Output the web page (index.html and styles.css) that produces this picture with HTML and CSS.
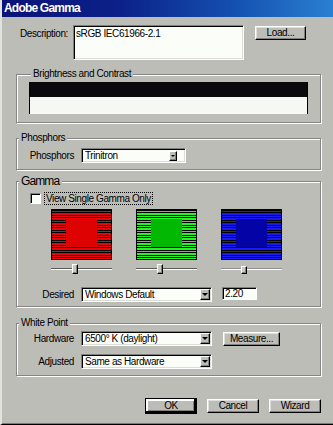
FILE: index.html
```html
<!DOCTYPE html>
<html>
<head>
<meta charset="utf-8">
<title>Adobe Gamma</title>
<link rel="stylesheet" href="styles.css">
</head>
<body>
<div class="window">
  <div class="titlebar">Adobe Gamma</div>
  <div class="main">
    <div class="desc-row">
      <span class="desc-lbl">Description:</span>
      <div class="textarea">sRGB IEC61966-2.1</div>
      <div class="btn load-btn">Load...</div>
    </div>

    <fieldset class="group bc-group">
      <legend>Brightness and Contrast</legend>
      <div class="bc-panel"><div class="bc-black"></div><div class="bc-white"></div></div>
    </fieldset>

    <fieldset class="group ph-group">
      <legend>Phosphors</legend>
      <div class="form-row">
        <span class="lbl">Phosphors</span>
        <div class="select sel-ph"><span class="sel-text">Trinitron</span><span class="drop drop-small"><i class="tri tri-small"></i></span></div>
      </div>
    </fieldset>

    <fieldset class="group gm-group">
      <legend class="legend-big">Gamma</legend>
      <div class="check-row">
        <span class="checkbox"></span>
        <span class="focus-lbl">View Single Gamma Only</span>
      </div>
      <div class="patches">
        <div class="gcol">
          <div class="patch patch-red"><div class="inner inner-red"></div></div>
          <div class="slider"><div class="track"></div><div class="thumb" style="left:21px"></div></div>
        </div>
        <div class="gcol">
          <div class="patch patch-green"><div class="inner inner-green"></div></div>
          <div class="slider"><div class="track"></div><div class="thumb" style="left:21px"></div></div>
        </div>
        <div class="gcol">
          <div class="patch patch-blue"><div class="inner inner-blue"></div></div>
          <div class="slider"><div class="track track-light"></div><div class="thumb thumb-short" style="left:20px"></div></div>
        </div>
      </div>
      <div class="form-row desired-row">
        <span class="lbl">Desired</span>
        <div class="select sel-wide"><span class="sel-text">Windows Default</span><span class="drop"><i class="tri"></i></span></div>
        <div class="field">2.20</div>
      </div>
    </fieldset>

    <fieldset class="group wp-group">
      <legend>White Point</legend>
      <div class="form-row">
        <span class="lbl">Hardware</span>
        <div class="select sel-wide"><span class="sel-text">6500° K (daylight)</span><span class="drop"><i class="tri"></i></span></div>
        <div class="btn measure-btn">Measure...</div>
      </div>
      <div class="form-row adj-row">
        <span class="lbl">Adjusted</span>
        <div class="select sel-wide"><span class="sel-text">Same as Hardware</span><span class="drop"><i class="tri"></i></span></div>
      </div>
    </fieldset>

    <div class="actions">
      <div class="btn default-btn">OK</div>
      <div class="btn act-btn">Cancel</div>
      <div class="btn act-btn">Wizard</div>
    </div>
  </div>
</div>
</body>
</html>
```

FILE: styles.css
```css
* { box-sizing: border-box; }
html, body { margin: 0; padding: 0; }
body {
  width: 333px;
  height: 425px;
  overflow: hidden;
  background: #bdbdb8;
  font-family: "Liberation Sans", Arial, sans-serif;
  font-size: 10px;
  letter-spacing: -0.4px;
  line-height: 13px;
  color: #000;
}
.window {
  width: 333px;
  height: 425px;
  background: #bdbdb8;
  border-left: 2px solid #e2e2de;
  border-bottom: 1px solid #000;
  box-shadow: inset 0 -1px 0 #7a7a7a;
  display: flex;
  flex-direction: column;
}
.titlebar {
  height: 17px;
  background: linear-gradient(to right, #0a1478 0%, #0b2088 35%, #1450b0 70%, #2a80d2 100%);
  color: #fff;
  font-weight: bold;
  font-size: 12px;
  letter-spacing: -0.8px;
  line-height: 17px;
  padding-left: 2px;
}
.main { padding: 0 12px 0 14px; }

/* description */
.desc-row { display: flex; margin-top: 8px; align-items: flex-start; }
.desc-lbl { width: 52px; text-align: right; margin-right: 5px; padding-top: 2px; }
.textarea {
  width: 171px;
  height: 35px;
  background: #fbfdf9;
  border: 1px solid;
  border-color: #808080 #fff #fff #808080;
  box-shadow: inset 1px 1px 0 #000, inset -1px -1px 0 #dcdcd8;
  padding: 1px 2px;
}
.btn {
  background: #bdbdb8;
  border: 1px solid;
  border-color: #fff #000 #000 #fff;
  box-shadow: inset -1px -1px 0 #808080, inset 1px 1px 0 #dedede;
  display: flex;
  align-items: center;
  justify-content: center;
  line-height: 12px;
}
.load-btn { width: 51px; height: 14px; margin-left: 11px; margin-top: 1px; }

/* group boxes */
.group {
  margin: 0;
  padding: 0;
  min-width: 0;
  border: 1px solid #858585;
  box-shadow: 1px 1px 0 #fff, inset 1px 1px 0 #fff;
}
.group legend {
  padding: 0 2px;
  margin-left: 2px;
  line-height: 12px;
  background: #bdbdb8;
}
.group legend.legend-big { font-size: 12px; letter-spacing: -0.9px; line-height: 14px; padding: 0 3px 0 2px; }

.bc-group { margin-top: 8px; padding: 2px 12px 8px; }
.bc-panel { border-left: 1px solid #000; border-right: 1px solid #000; }
.bc-black { height: 15px; background: #0a0a0c; }
.bc-white { height: 17px; background: #f6f8f4; }

.ph-group { margin-top: 9px; padding: 4px 0 6px; }
.gm-group { margin-top: 4px; padding: 4px 0 4px; }
.wp-group { margin-top: 10px; padding: 2px 0 6px; }

.form-row { display: flex; align-items: center; height: 15px; }
.lbl { width: 57px; text-align: right; margin-right: 7px; }
.adj-row { margin-top: 8px; }
.desired-row { margin-top: 12px; }

.select {
  height: 15px;
  background: #fbfdf9;
  border: 1px solid;
  border-color: #808080 #fff #fff #808080;
  box-shadow: inset 1px 1px 0 #000, inset -1px -1px 0 #dcdcd8;
  padding: 1px 1px 1px 2px;
  display: flex;
  align-items: center;
}
.sel-text { flex: 1; line-height: 11px; padding-left: 1px; white-space: nowrap; }
.sel-ph { width: 105px; }
.sel-wide { width: 131px; }
.drop {
  width: 10px;
  height: 11px;
  background: #bdbdb8;
  border: 1px solid;
  border-color: #fff #000 #000 #fff;
  box-shadow: inset -1px -1px 0 #808080;
  display: flex;
  align-items: center;
  justify-content: center;
}
.drop-small { width: 8px; height: 10px; margin-right: 7px; }
.tri {
  display: block;
  width: 0;
  height: 0;
  border-top: 3px solid #000;
  border-left: 3px solid transparent;
  border-right: 3px solid transparent;
}
.tri-small { border-top-width: 2px; border-left-width: 2px; border-right-width: 2px; }

.field {
  width: 35px;
  height: 13px;
  margin-left: 10px;
  margin-top: -2px;
  background: #fbfdf9;
  border: 1px solid;
  border-color: #808080 #fff #fff #808080;
  box-shadow: inset 1px 1px 0 #000;
  padding: 0 2px;
  line-height: 11px;
}
.measure-btn { width: 57px; height: 14px; margin-left: 11px; }

/* gamma */
.check-row { display: flex; align-items: center; padding-left: 13px; height: 12px; }
.checkbox {
  width: 11px;
  height: 11px;
  background: #fbfdf9;
  border: 1px solid;
  border-color: #808080 #fff #fff #808080;
  box-shadow: inset 1px 1px 0 #000;
  margin-right: 4px;
}
.focus-lbl { outline: 1px dotted #000; outline-offset: 0; padding: 0 1px; line-height: 11px; }

.patches { display: flex; gap: 24px; padding-left: 34px; margin-top: 5px; }
.gcol { display: flex; flex-direction: column; width: 61px; }
.patch {
  width: 61px;
  height: 51px;
  border: 1px solid #000;
  padding: 9px 0 0 14px;
}
.patch-red { background: repeating-linear-gradient(180deg, #000 0px, #000 1px, #ec0404 1px, #ec0404 2px, #000 2px, #000 3px, #ec0404 3px, #ec0404 5px); }
.patch-green { background: repeating-linear-gradient(180deg, #000 0px, #000 1px, #22f622 1px, #22f622 2px, #000 2px, #000 3px, #22f622 3px, #22f622 5px); }
.patch-blue { background: repeating-linear-gradient(180deg, #000 0px, #000 1px, #1a1af8 1px, #1a1af8 2px, #000 2px, #000 3px, #1a1af8 3px, #1a1af8 5px); }
.patch .inner { width: 31px; height: 28px; }
.inner-red { background: #de0202; }
.inner-green { background: #02b802; }
.inner-blue { background: #0404a6; }

.slider { position: relative; height: 12px; margin-top: 3px; }
.track { margin-top: 5px; height: 2px; border-top: 1px solid #5a5a5a; border-bottom: 1px solid #fff; }
.track-light { border-top-color: #909090; }
.thumb {
  position: absolute;
  top: 1px;
  width: 6px;
  height: 10px;
  background: #c8c8c4;
  border: 1px solid;
  border-color: #fff #000 #000 #fff;
  box-shadow: inset -1px -1px 0 #808080;
}
.thumb-short { top: 3px; height: 8px; }

/* bottom buttons */
.actions { display: flex; justify-content: flex-end; align-items: center; gap: 10px; margin-top: 22px; }
.act-btn { width: 52px; height: 14px; }
.default-btn { width: 52px; height: 16px; border-color: #000; box-shadow: inset -2px -2px 0 #000, inset 2px 2px 0 #fff, inset -3px -3px 0 #808080; }
```
